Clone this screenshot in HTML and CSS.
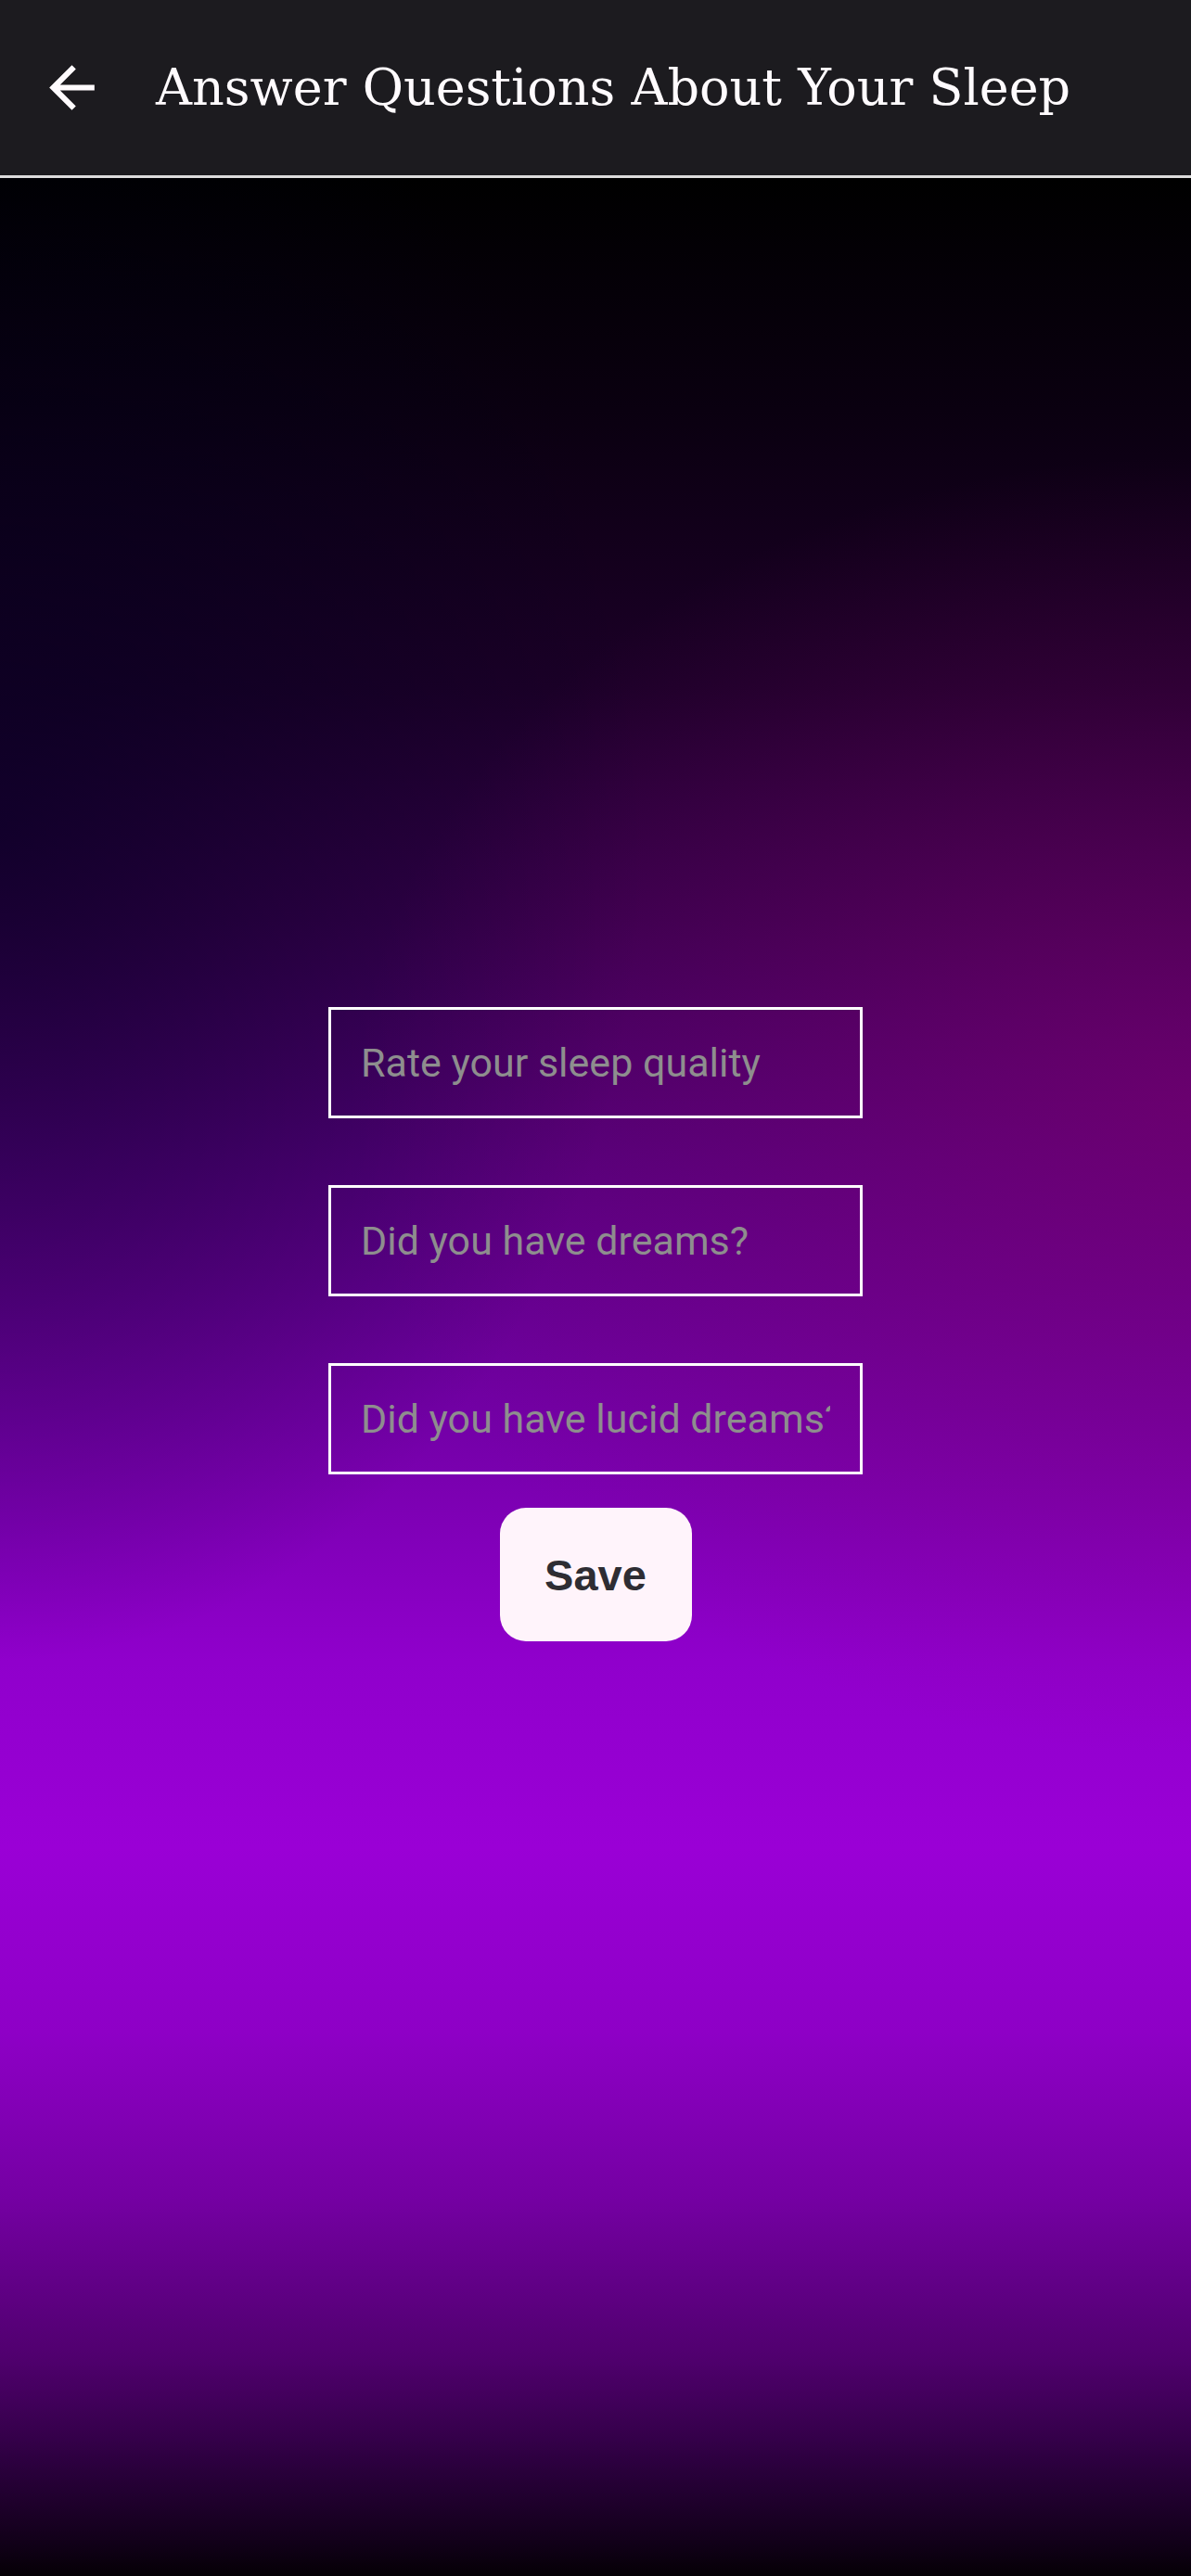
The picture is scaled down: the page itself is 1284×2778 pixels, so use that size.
FILE: index.html
```html
<!DOCTYPE html>
<html lang="en">
<head>
<meta charset="utf-8">
<title>Answer Questions About Your Sleep</title>
<link rel="stylesheet" href="styles.css">
</head>
<body>
<div class="app">
  <header class="topbar">
    <button class="back" aria-label="Back">
      <svg viewBox="0 0 24 24" width="73" height="73"><path fill="#FFFBFE" d="M20 11H7.83l5.59-5.59L12 4l-8 8 8 8 1.41-1.41L7.83 13H20v-2z"/></svg>
    </button>
    <h1 class="title">Answer Questions About Your Sleep</h1>
  </header>
  <main class="main">
    <form class="form">
      <input class="field" type="text" placeholder="Rate your sleep quality">
      <input class="field" type="text" placeholder="Did you have dreams?">
      <input class="field" type="text" placeholder="Did you have lucid dreams?">
      <button class="save" type="button">Save</button>
    </form>
  </main>
</div>
</body>
</html>
```
FILE: styles.css
```css
html, body {
  margin: 0;
  padding: 0;
  background: #000;
}
.app {
  display: flex;
  flex-direction: column;
  min-height: 2778px;
}
.topbar {
  display: flex;
  align-items: center;
  height: 189px;
  background: #1c1b1f;
  border-bottom: 3px solid #dcdcdc;
  padding-left: 41px;
  gap: 54px;
}
.back {
  background: none;
  border: 0;
  padding: 0;
  width: 73px;
  height: 73px;
  display: flex;
}
.title {
  margin: 0;
  font-family: "DejaVu Serif", serif;
  font-weight: normal;
  font-size: 54px;
  color: #fffbfe;
}
.main {
  flex: 1;
  background:
    radial-gradient(ellipse 900px 700px at 100% 1000px, rgba(130, 0, 110, 0.55), rgba(130, 0, 110, 0) 100%),
    radial-gradient(ellipse 700px 900px at 0% 700px, rgba(0, 0, 30, 0.6), rgba(0, 0, 30, 0) 100%),
    linear-gradient(180deg,
      #000000 0px,
      #0a0010 250px,
      #1c0028 550px,
      #36004c 800px,
      #52007a 1050px,
      #7400a8 1350px,
      #9000cc 1600px,
      #9a00d6 1800px,
      #8e00c6 2000px,
      #7400a2 2180px,
      #50006e 2350px,
      #2a003c 2470px,
      #0e0014 2560px,
      #050005 2586px);
  display: flex;
  justify-content: center;
}
.form {
  display: flex;
  flex-direction: column;
  align-items: center;
  padding-top: 894px;
}
.field {
  box-sizing: border-box;
  width: 576px;
  height: 120px;
  border: 3px solid #ffffff;
  background: transparent;
  padding: 0 32px;
  margin: 0 0 72px 0;
  font-family: Roboto, "Liberation Sans", sans-serif;
  font-size: 43px;
  color: #ffffff;
  outline: none;
}
.field:nth-of-type(3) {
  margin-bottom: 36px;
}
.field::placeholder {
  color: #8e8e8e;
}
.save {
  width: 207px;
  height: 144px;
  border: 0;
  border-radius: 28px;
  background: #fff4fb;
  color: #2e2d33;
  font-family: "Liberation Sans", Arial, sans-serif;
  font-weight: bold;
  font-size: 47px;
  padding: 0;
}
```
